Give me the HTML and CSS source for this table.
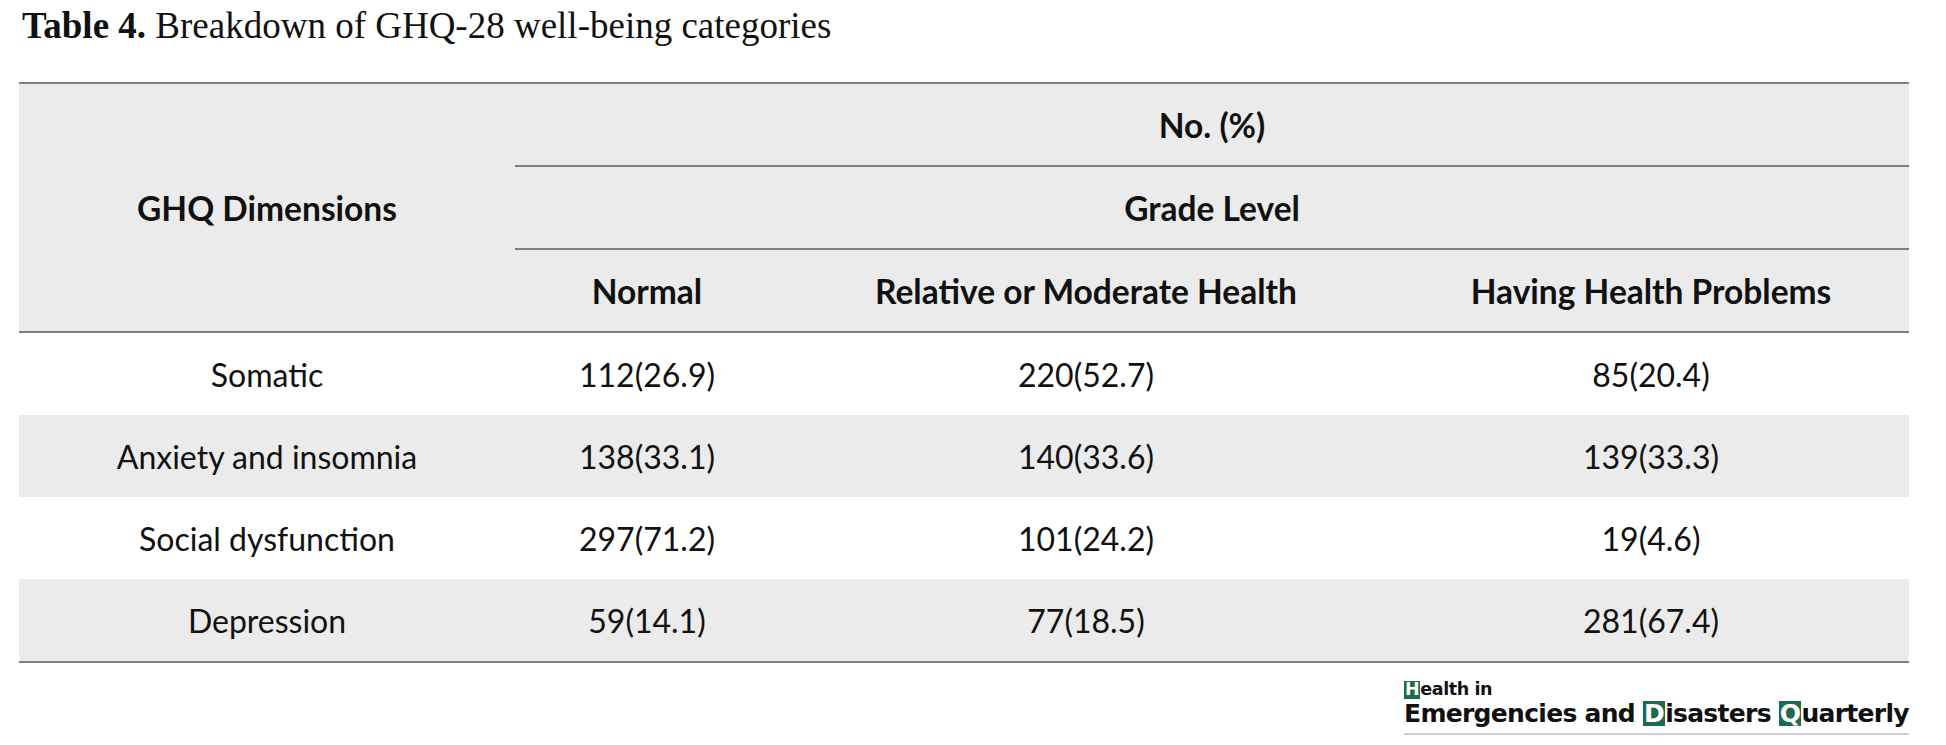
FILE: index.html
```html
<!DOCTYPE html>
<html lang="en">
<head>
<meta charset="utf-8">
<title>Table 4</title>
<link rel="stylesheet" href="styles.css">
</head>
<body>
<div class="page">
  <h1 class="caption"><b>Table 4.</b> Breakdown of GHQ-28 well-being categories</h1>
  <table class="data">
    <colgroup>
      <col class="c1"><col class="c2"><col class="c3"><col class="c4">
    </colgroup>
    <thead>
      <tr class="hrow">
        <th rowspan="3" class="dim">GHQ Dimensions</th>
        <th colspan="3" class="span">No. (%)</th>
      </tr>
      <tr class="hrow">
        <th colspan="3" class="span">Grade Level</th>
      </tr>
      <tr class="hrow">
        <th>Normal</th>
        <th>Relative or Moderate Health</th>
        <th>Having Health Problems</th>
      </tr>
    </thead>
    <tbody>
      <tr><td>Somatic</td><td>112(26.9)</td><td>220(52.7)</td><td>85(20.4)</td></tr>
      <tr class="alt"><td>Anxiety and insomnia</td><td>138(33.1)</td><td>140(33.6)</td><td>139(33.3)</td></tr>
      <tr><td>Social dysfunction</td><td>297(71.2)</td><td>101(24.2)</td><td>19(4.6)</td></tr>
      <tr class="alt"><td>Depression</td><td>59(14.1)</td><td>77(18.5)</td><td>281(67.4)</td></tr>
    </tbody>
  </table>
  <div class="footer">
    <div class="logo">
      <div class="logo-top"><span class="box">H</span>ealth in</div>
      <div class="logo-main">Emergencies and <span class="box">D</span>isasters <span class="box">Q</span>uarterly</div>
    </div>
  </div>
</div>
</body>
</html>
```
FILE: styles.css
```css
html, body {
  margin: 0;
  padding: 0;
  background: #ffffff;
}

.page {
  padding: 0 37px 0 19px;
  color: #111;
}

.caption {
  margin: 0;
  padding: 6px 0 0 3px;
  height: 78px;
  box-sizing: border-box;
  font-family: "Liberation Serif", "Times New Roman", serif;
  font-weight: normal;
  font-size: 37px;
  line-height: 40px;
  color: #111;
}

.caption b {
  font-weight: bold;
}

.data {
  width: 1890px;
  border-collapse: collapse;
  table-layout: fixed;
  font-family: Lato, "Open Sans", sans-serif;
  font-size: 32px;
  margin-top: 4px;
  color: #111;
}

.c1 { width: 496px; }
.c2 { width: 264px; }
.c3 { width: 614px; }
.c4 { width: 516px; }

.data thead {
  background: #ebebeb;
  border-top: 2px solid #7f7f7f;
  border-bottom: 2px solid #7f7f7f;
}

.data th {
  font-weight: bold;
  font-size: 33.5px;
  text-align: center;
  height: 81px;
  padding: 0;
  vertical-align: middle;
}

.data th.span {
  border-bottom: 2px solid #7f7f7f;
}

.data td {
  text-align: center;
  height: 82px;
  padding: 0;
  vertical-align: middle;
  font-weight: normal;
}

.data tbody {
  border-bottom: 2px solid #7f7f7f;
}

.data tr.alt td {
  background: #ebebeb;
}

.footer {
  display: flex;
  justify-content: flex-end;
  margin-top: 16px;
}

.logo {
  width: 505px;
  border-bottom: 2px solid #cfcfcf;
  padding-bottom: 4px;
  font-family: "DejaVu Sans", sans-serif;
  font-weight: bold;
  color: #111;
}

.logo-top {
  font-size: 17.5px;
  line-height: 20px;
  letter-spacing: -0.4px;
}

.logo-main {
  font-size: 25px;
  line-height: 30px;
  letter-spacing: -0.7px;
  white-space: nowrap;
}

.box {
  display: inline-block;
  background: #1d6b4c;
  color: #ffffff;
  padding: 0 1px;
  line-height: 1;
}
```
